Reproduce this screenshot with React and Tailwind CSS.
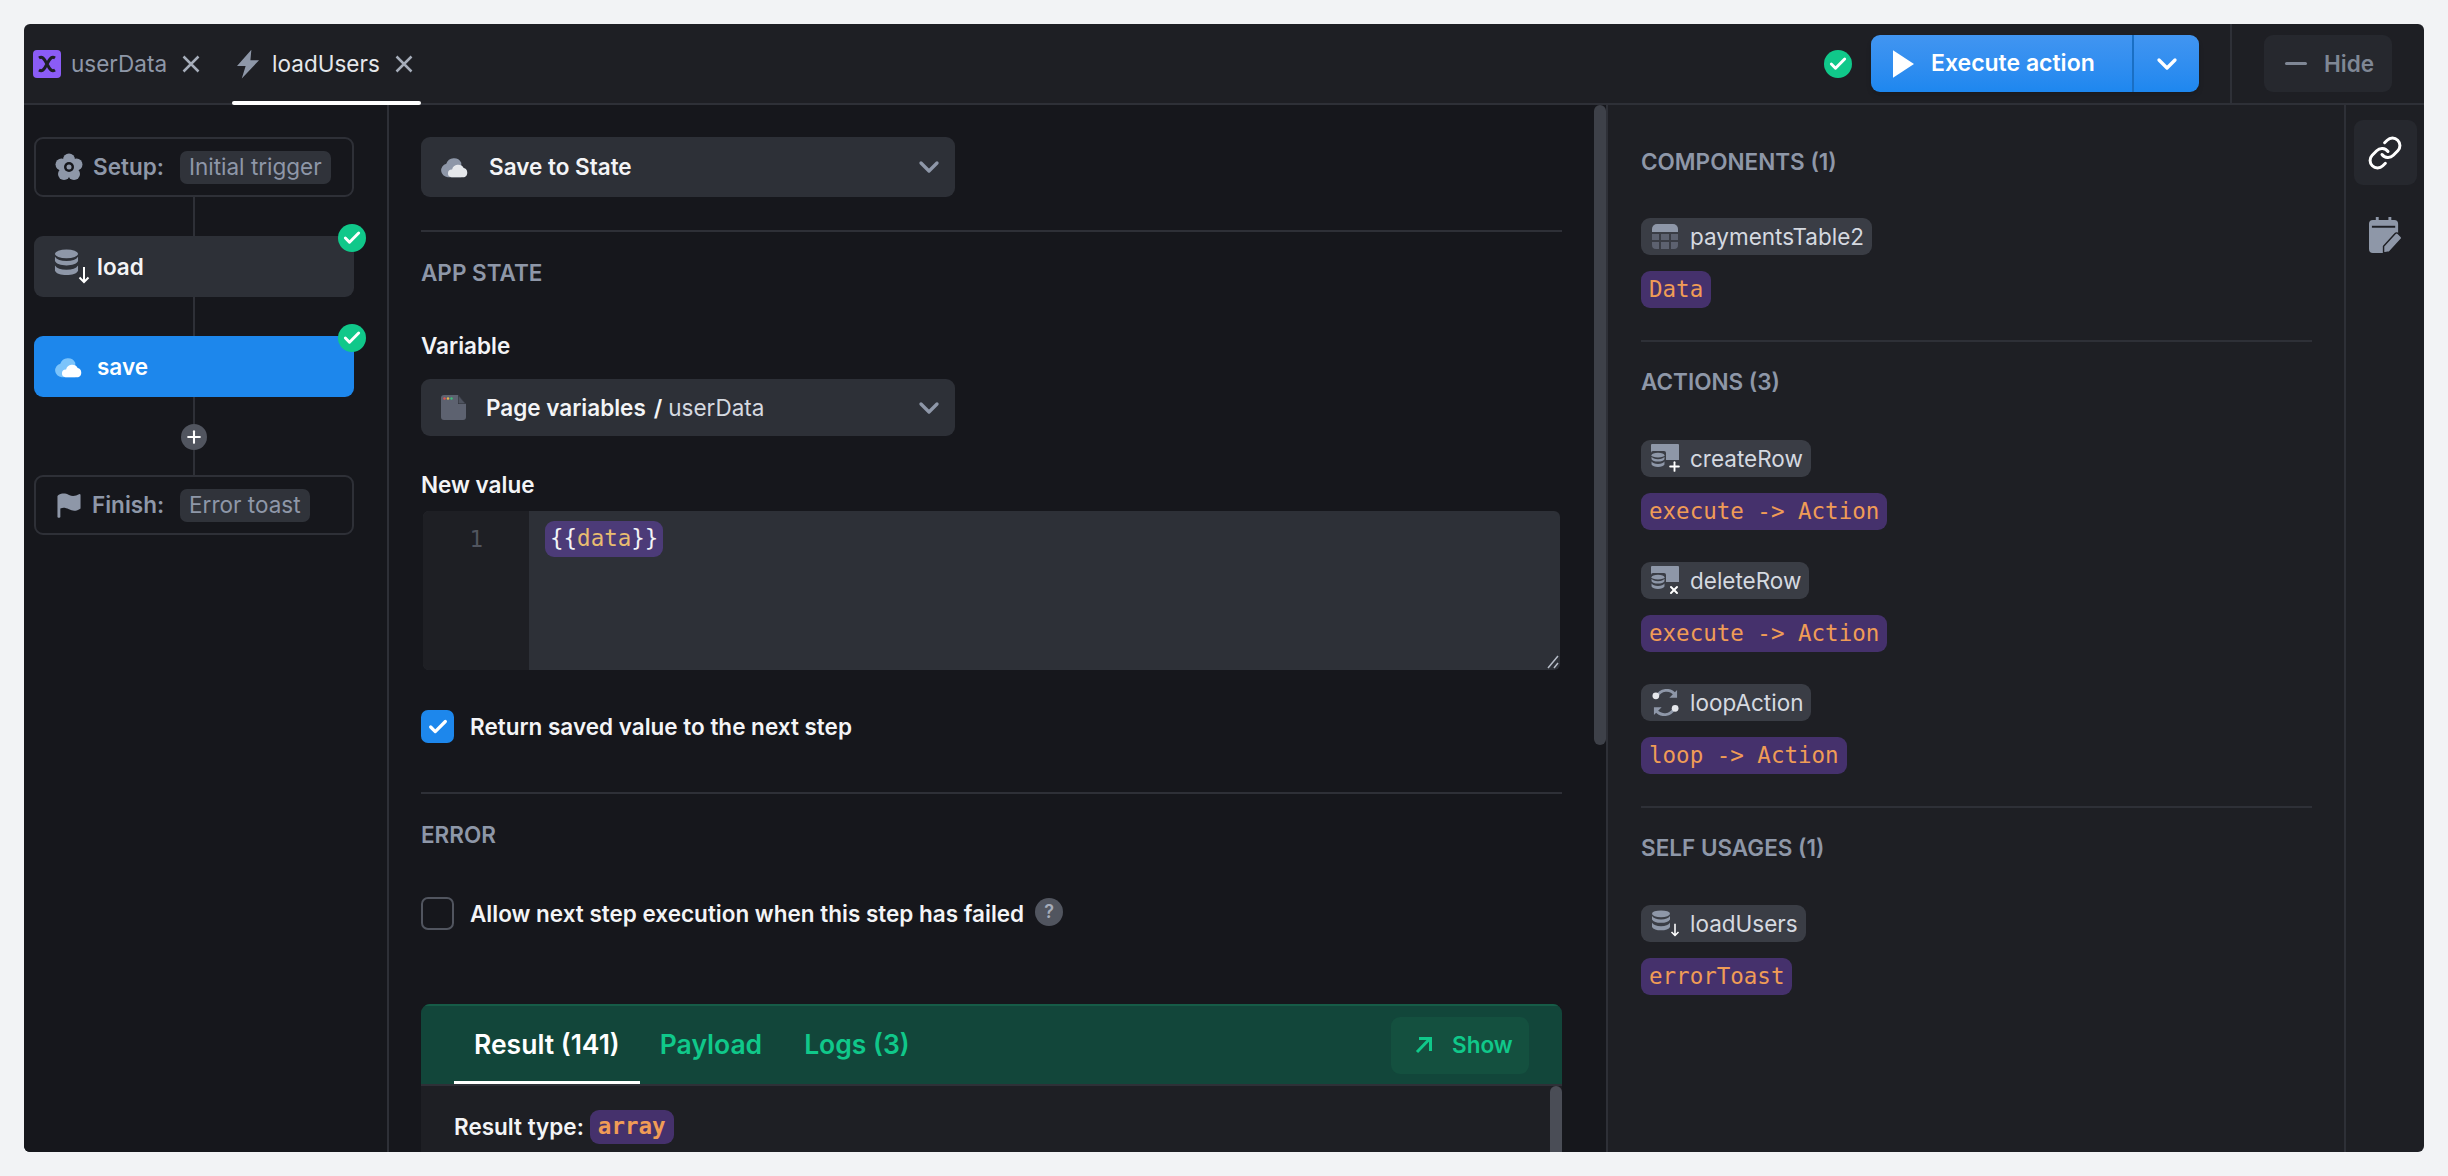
import React from 'react';
import { Check, ChevronDown, Link, Plus, X } from 'lucide-react';

const Db = ({ className = '' }) => (
  <svg viewBox="0 0 26 28" className={className} fill="currentColor">
    <ellipse cx="13" cy="5" rx="12" ry="4.5" />
    <path d="M1 8c2 3 6 4.5 12 4.5S23 11 25 8v4.5c-1.5 3-6 4.5-12 4.5S2.500 15.500 1 12.500z" />
    <path d="M1 17c2 3 6 4.500 12 4.500S23 20 25 17v5.500c-1.500 3-6 4.500-12 4.500S2.500 25.500 1 22.500z" />
  </svg>
);

const DbDown = ({ big }) => (
  <span className={`relative block shrink-0 ${big ? 'w-[36px] h-[36px]' : 'w-[28px] h-[28px]'}`}>
    <span className="absolute left-0 top-0 text-[#8e97a8]">
      <Db className={big ? 'w-[25px] h-[27px]' : 'w-[20px] h-[21px]'} />
    </span>
    <svg viewBox="0 0 12 18" className={`absolute text-white ${big ? 'left-[24px] top-[17px] w-[12px] h-[18px]' : 'left-[19px] top-[13px] w-[10px] h-[14px]'}`} fill="none" stroke="currentColor" strokeWidth="2">
      <path d="M6 1v15M1.500 11.500 6 16l4.500-4.500" />
    </svg>
  </span>
);

const DbSheet = ({ mark }) => (
  <span className="relative block w-[30px] h-[30px] shrink-0">
    <span className="absolute left-0 top-0 w-[28px] h-[17px] bg-[#8e97a8] rounded-[1px]" />
    <span className="absolute left-0 top-[7px] w-[15px] h-[17px] bg-[#3a3d45] rounded-[2px]" />
    <span className="absolute left-0 top-[8px] text-[#8e97a8]">
      <Db className="w-[14px] h-[16px]" />
    </span>
    <span className="absolute left-[14px] top-[16px] w-[14px] h-[14px] bg-[#3a3d45]" />
    {mark === 'plus' ? (
      <Plus className="absolute left-[16px] top-[15px] w-[15px] h-[15px] text-white" strokeWidth={3} />
    ) : (
      <X className="absolute left-[17px] top-[18px] w-[12px] h-[12px] text-white" strokeWidth={4} />
    )}
  </span>
);

const Cloud = ({ back, front, className = '' }) => (
  <svg viewBox="0 0 30 22" className={className}>
    <path d="M8 21.500a7 7 0 0 1-1.500-13.800A8.500 8.500 0 0 1 22 6.500V21.500z" fill={back} />
    <path d="M12 21.500a4 4 0 0 1 .5-8 6.500 6.500 0 0 1 12-1.500 5 5 0 0 1 .5 9.500z" fill={front} />
  </svg>
);

const Close = () => (
  <svg viewBox="0 0 18 18" className="w-[18px] h-[18px] shrink-0 text-[#a6adba]" fill="none" stroke="currentColor" strokeWidth="2.500">
    <path d="M1.500 1.500l15 15M16.500 1.500l-15 15" />
  </svg>
);

const Badge = () => (
  <span className="absolute right-[-12px] top-[-12px] flex items-center justify-center w-[28px] h-[28px] rounded-full bg-[#10c88a]">
    <Check className="w-[20px] h-[20px] text-white" strokeWidth={3.500} />
  </span>
);

const Line = ({ className }) => <div className={`w-[2px] mx-auto bg-[#2e3037] ${className}`} />;

const Label = ({ children, tone }) => (
  <div className={`text-[22.500px] leading-[28px] font-semibold ${tone || 'text-[#8e97a8]'}`}>{children}</div>
);

const Chip = ({ icon, children }) => (
  <div className="flex items-center w-fit h-[37px] pl-[10px] pr-[8px] gap-[9px] rounded-[9px] bg-[#3a3d45] text-[22.500px] text-[#d5d9e0]">
    <span className="flex items-center w-[30px] shrink-0">{icon}</span>
    <span>{children}</span>
  </div>
);

const Code = ({ children }) => (
  <div className="flex items-center w-fit h-[37px] px-[8px] rounded-[9px] bg-[#45316c] text-[#f09c56] text-[22.500px] font-['DejaVu_Sans_Mono',monospace]">
    {children}
  </div>
);

const Usage = ({ icon, name, code, className = '' }) => (
  <div className={className}>
    <Chip icon={icon}>{name}</Chip>
    <div className="mt-[16px]">
      <Code>{code}</Code>
    </div>
  </div>
);

const Select = ({ icon, children }) => (
  <div className="flex items-center w-[534px] rounded-[9px] bg-[#2d3037] pl-[19px] pr-[10px] h-full">
    {icon}
    <div className="flex-1 text-[22.500px] text-[#f3f4f6] flex items-center">{children}</div>
    <ChevronDown className="w-[32px] h-[32px] text-[#8e97a8]" strokeWidth={2.500} />
  </div>
);

const TableIcon = () => (
  <svg viewBox="0 0 26 25" className="ml-[1px] w-[26px] h-[25px] shrink-0">
    <path d="M5 0h16a5 5 0 0 1 5 5v3H0V5a5 5 0 0 1 5-5z" fill="#8e97a8" />
    <path d="M0 10h7v6H0zM9 10h8v6H9zM19 10h7v6h-7zM0 18h7v7H4a4 4 0 0 1-4-4zM9 18h8v7H9zM19 18h7v3a4 4 0 0 1-4 4h-3z" fill="#5d6270" />
  </svg>
);

const LoopIcon = () => (
  <svg viewBox="0 0 30 28" className="w-[29px] h-[27px] shrink-0" fill="none">
    <path d="M6 8a11 11 0 0 1 19-2M24 20a11 11 0 0 1-19 2" stroke="#8e97a8" strokeWidth="3" />
    <path d="M27 1v8h-8zM3 27v-8h8z" fill="#8e97a8" />
    <circle cx="5" cy="7" r="3.500" fill="#e5e7eb" />
    <circle cx="25" cy="20" r="3.500" fill="#e5e7eb" />
  </svg>
);

export default function App() {
  return (
    <div className="h-[1176px] p-6 bg-[#f2f3f5] font-['Inter',sans-serif] overflow-hidden">
      <div className="flex flex-col h-full rounded-[6px] overflow-hidden bg-[#1e1f24]">
        {/* Header */}
        <div className="flex items-stretch h-[81px] shrink-0 border-b-2 border-[#2e3037]">
          <div className="flex items-center flex-1 relative pl-[9px] text-[22.500px]">
            <span className="flex items-center justify-center w-[28px] h-[28px] rounded-[4px] bg-[#8b5cf6]">
              <svg viewBox="0 0 20 20" className="w-[20px] h-[20px]" fill="none" stroke="#1e1f24" strokeWidth="3">
                <path d="M2 4c3-2 5 0 8 6s5 8 8 6M18 4c-3-2-5 0-8 6s-5 8-8 6" />
              </svg>
            </span>
            <span className="ml-[10px] text-[#8e97a8]">userData</span>
            <span className="ml-[15px]"><Close /></span>
            <div className="relative flex items-center h-full ml-[32px] w-[189px] pl-[5px]">
              <svg viewBox="0 0 24 30" className="w-[23px] h-[30px] text-[#8e97a8] shrink-0" fill="currentColor">
                <path d="M15 0 0 17h9l-4 13L23 11h-9z" />
              </svg>
              <span className="ml-[12px] text-[#e5e7eb]">loadUsers</span>
              <span className="ml-[15px]"><Close /></span>
              <div className="absolute left-0 right-0 bottom-[-2px] h-[4px] rounded-full bg-white" />
            </div>
            <div className="flex-1" />
            <span className="flex items-center justify-center w-[28px] h-[28px] rounded-full bg-[#10c88a] mr-[19px]">
              <Check className="w-[20px] h-[20px] text-white" strokeWidth={3.500} />
            </span>
            <div className="flex h-[57px] w-[328px] rounded-[9px] overflow-hidden bg-gradient-to-b from-[#4195f1] to-[#1d87ef] shadow-md mr-[31px] text-white">
              <div className="flex items-center flex-1 pl-[22px] gap-[17px] text-[23px] font-semibold">
                <svg viewBox="0 0 20 26" className="w-[21px] h-[28px]" fill="currentColor">
                  <path d="M0 0 20 13 0 26z" />
                </svg>
                Execute action
              </div>
              <div className="w-[2px] bg-[#1a6fc4]" />
              <div className="flex items-center justify-center w-[65px]">
                <ChevronDown className="w-[32px] h-[32px]" strokeWidth={2.500} />
              </div>
            </div>
          </div>
          <div className="flex items-center w-[194px] border-l-2 border-[#2e3037] pl-[32px]">
            <div className="flex items-center pl-[21px] gap-[17px] w-[128px] h-[57px] rounded-[9px] bg-[#26282e] text-[22.500px] font-semibold text-[#7f8795]">
              <div className="w-[22px] h-[3px] rounded-full bg-[#7f8795]" />
              Hide
            </div>
          </div>
        </div>

        <div className="flex flex-1 min-h-0">
          {/* Steps */}
          <div className="w-[365px] shrink-0 bg-[#16171c] border-r-2 border-[#2e3037] pl-[10px] pr-[33px] pt-[32px] text-[22.500px]">
            <div className="flex items-center h-[60px] rounded-[9px] border-2 border-[#2e3037] pl-[19px]">
              <svg viewBox="0 0 28 28" className="w-[28px] h-[28px] text-[#8e97a8] shrink-0" fill="currentColor">
                <circle cx="14" cy="6.500" r="6" />
                <circle cx="21.500" cy="11.500" r="6" />
                <circle cx="19" cy="21" r="6" />
                <circle cx="9" cy="21" r="6" />
                <circle cx="6.500" cy="11.500" r="6" />
                <circle cx="14" cy="14" r="7" />
                <circle cx="14" cy="14" r="5" fill="#16171c" />
                <circle cx="14" cy="14" r="2.500" />
              </svg>
              <span className="ml-[10px] font-semibold text-[#8e97a8]">Setup:</span>
              <span className="ml-[16px] px-[9px] h-[33px] flex items-center rounded-[7px] bg-[#30333a] text-[#8e97a8]">Initial trigger</span>
            </div>
            <Line className="h-[39px]" />
            <div className="relative flex items-center h-[61px] rounded-[9px] bg-[#2d3037] pl-[20px]">
              <DbDown big />
              <span className="ml-[7px] font-semibold text-[#f3f4f6]">load</span>
              <Badge />
            </div>
            <Line className="h-[39px]" />
            <div className="relative flex items-center h-[61px] rounded-[9px] bg-[#1d87ec] pl-[20px]">
              <Cloud back="#7cc4fb" front="#ffffff" className="w-[29px] h-[22px] shrink-0" />
              <span className="ml-[14px] font-semibold text-white">save</span>
              <Badge />
            </div>
            <Line className="h-[27px]" />
            <div className="flex items-center justify-center w-[26px] h-[26px] mx-auto rounded-full bg-[#51555f]">
              <Plus className="w-[20px] h-[20px] text-white" strokeWidth={2.500} />
            </div>
            <Line className="h-[25px]" />
            <div className="flex items-center h-[60px] rounded-[9px] border-2 border-[#2e3037] pl-[21px]">
              <svg viewBox="0 0 24 26" className="w-[24px] h-[25px] text-[#8e97a8] shrink-0" fill="currentColor">
                <path d="M1 2c4-2 7-2 11 0s7 1 11-1c1 0 1 1 1 1v14c-4 3-8 3-12 1s-6-2-9-1v9c0 1-3 1-3 0V3z" />
              </svg>
              <span className="ml-[11px] font-semibold text-[#8e97a8]">Finish:</span>
              <span className="ml-[16px] px-[9px] h-[33px] flex items-center rounded-[7px] bg-[#30333a] text-[#8e97a8]">Error toast</span>
            </div>
          </div>

          {/* Step form */}
          <div className="relative w-[1219px] shrink-0 bg-[#16171c] border-r-2 border-[#2e3037] overflow-hidden pl-[32px] pr-[44px] pt-[32px]">
            <div className="absolute right-0 top-0 w-[12px] h-[640px] rounded-full bg-[#3e4149]" />

            <div className="h-[60px]">
              <Select icon={<Cloud back="#8e97a8" front="#e5e7eb" className="w-[29px] h-[22px] mr-[20px] shrink-0" />}>
                <span className="font-semibold">Save to State</span>
              </Select>
            </div>
            <div className="h-[2px] mt-[33px] bg-[#2e3037]" />
            <div className="mt-[27px]"><Label>APP STATE</Label></div>
            <div className="mt-[45px]"><Label tone="text-[#f3f4f6]">Variable</Label></div>
            <div className="h-[57px] mt-[19px]">
              <Select icon={
                <svg viewBox="0 0 25 25" className="ml-[1px] w-[25px] h-[25px] mr-[20px] shrink-0">
                  <path d="M3 0h14l8 9v13a3 3 0 0 1-3 3H3a3 3 0 0 1-3-3V3a3 3 0 0 1 3-3z" fill="#5d6270" />
                  <path d="M17 0l8 9h-8z" fill="#2d3037" />
                  <path d="M17.500 1l6.500 7.500h-6.500z" fill="#5d6270" opacity=".7" />
                  <circle cx="3.500" cy="3.500" r="1.200" fill="#e05252" />
                  <circle cx="7" cy="3.500" r="1.200" fill="#e5b84c" />
                  <circle cx="10.500" cy="3.500" r="1.200" fill="#3fbf7a" />
                </svg>
              }>
                <span className="font-semibold">Page variables</span>
                <span className="font-semibold ml-[8px] mr-[6px]">/</span>
                <span className="text-[#d5d9e0]">userData</span>
              </Select>
            </div>
            <div className="mt-[35px]"><Label tone="text-[#f3f4f6]">New value</Label></div>
            <div className="flex h-[159px] mt-[12px] mx-[2px] rounded-[6px] overflow-hidden bg-[#2d3037]">
              <div className="w-[106px] bg-[#1e1f24] pt-[13px] pr-[46px] text-right text-[22.500px] leading-[30px] text-[#51555f] font-['DejaVu_Sans_Mono',monospace]">1</div>
              <div className="relative flex-1 pt-[10px] pl-[16px]">
                <div className="flex items-center w-fit h-[36px] px-[5px] rounded-[9px] bg-[#4c3b78] text-[22.500px] text-[#f3f4f6] font-['DejaVu_Sans_Mono',monospace]">
                  {'{{'}<span className="text-[#e9bd70]">data</span>{'}}'}
                </div>
                <svg viewBox="0 0 12 14" className="absolute right-[1px] bottom-[1px] w-[12px] h-[14px]" fill="none" stroke="#b6bcc7" strokeWidth="1.500">
                  <path d="M1 13 11 1M7 13l4-5" />
                </svg>
              </div>
            </div>
            <div className="flex items-center h-[33px] mt-[40px] text-[22.500px] font-semibold text-[#f3f4f6]">
              <span className="flex items-center justify-center w-[33px] h-[33px] rounded-[7px] bg-[#1d87ec]">
                <Check className="w-[22px] h-[22px] text-white" strokeWidth={3.500} />
              </span>
              <span className="ml-[16px]">Return saved value to the next step</span>
            </div>
            <div className="h-[2px] mt-[49px] bg-[#2e3037]" />
            <div className="mt-[27px]"><Label>ERROR</Label></div>
            <div className="flex items-center h-[33px] mt-[48px] text-[22.500px] font-semibold text-[#f3f4f6]">
              <span className="w-[33px] h-[33px] rounded-[7px] border-2 border-[#51555f]" />
              <span className="ml-[16px]">Allow next step execution when this step has failed</span>
              <span className="flex items-center justify-center ml-[11px] mb-[4px] w-[28px] h-[28px] rounded-full bg-[#51555f] text-[18px] font-semibold text-[#a6adba]">?</span>
            </div>

            <div className="relative mt-[74px] rounded-t-[9px] overflow-hidden bg-[#1e1f24] h-[148px]">
              <div className="flex items-center h-[82px] bg-[#12463a] border-t-2 border-[#165c47] border-b-2 border-b-[#2e3037] pl-[33px] pr-[33px] text-[26.500px] font-semibold text-[#10c88a]">
                <div className="relative flex items-center h-full px-[20px] text-white">
                  Result (141)
                  <div className="absolute left-0 right-0 bottom-0 h-[3px] bg-white" />
                </div>
                <span className="ml-[20px]">Payload</span>
                <span className="ml-[42px]">Logs (3)</span>
                <div className="flex-1" />
                <div className="flex items-center justify-start pl-[23px] gap-[18px] w-[138px] h-[57px] rounded-[9px] bg-[#14503f] text-[22.500px]">
                  <svg viewBox="0 0 20 18" className="w-[20px] h-[18px]" fill="none" stroke="currentColor" strokeWidth="3">
                    <path d="M3 16 16 2.500M5 2.500h11.500V15" />
                  </svg>
                  Show
                </div>
              </div>
              <div className="flex items-center h-[34px] mt-[24px] pl-[33px] text-[22.500px] font-semibold text-[#f3f4f6]">
                Result type:
                <span className="flex items-center h-[34px] px-[8px] ml-[6px] rounded-[9px] bg-[#45316c] text-[#f09c56] text-[22.500px] font-['DejaVu_Sans_Mono',monospace]">array</span>
              </div>
              <div className="absolute right-0 top-[82px] w-[12px] h-[80px] rounded-full bg-[#4a4d56]" />
            </div>
          </div>

          {/* Usages */}
          <div className="flex-1 pl-[33px] pr-[32px] pt-[43px]">
            <Label>COMPONENTS (1)</Label>
            <Usage className="mt-[42px]" icon={<TableIcon />} name="paymentsTable2" code="Data" />
            <div className="h-[2px] mt-[32px] bg-[#2e3037]" />
            <div className="mt-[26px]"><Label>ACTIONS (3)</Label></div>
            <Usage className="mt-[44px]" icon={<DbSheet mark="plus" />} name="createRow" code="execute -> Action" />
            <Usage className="mt-[32px]" icon={<DbSheet mark="x" />} name="deleteRow" code="execute -> Action" />
            <Usage className="mt-[32px]" icon={<LoopIcon />} name="loopAction" code="loop -> Action" />
            <div className="h-[2px] mt-[32px] bg-[#2e3037]" />
            <div className="mt-[26px]"><Label>SELF USAGES (1)</Label></div>
            <Usage className="mt-[43px]" icon={<DbDown />} name="loadUsers" code="errorToast" />
          </div>

          {/* Side tools */}
          <div className="flex flex-col items-center w-[80px] shrink-0 border-l-2 border-[#2e3037] pt-[15px]">
            <div className="flex items-center justify-center w-[63px] h-[65px] rounded-[9px] bg-[#26282e]">
              <Link className="w-[36px] h-[36px] text-white" strokeWidth={2} />
            </div>
            <svg viewBox="0 0 34 37" className="mt-[32px] w-[33px] h-[36px] text-[#8e97a8]" fill="currentColor">
              <path d="M7 0h3v3h10V0h3v3h3a4 4 0 0 1 4 4v10L15 30v7H4a4 4 0 0 1-4-4V7a4 4 0 0 1 4-4h3z" />
              <rect x="3" y="9" width="24" height="2" fill="#1e1f24" />
              <path d="M27 17a2 2 0 0 1 3 0l3 3a2 2 0 0 1 0 3L21 36l-6 1 0-7z" stroke="#1e1f24" strokeWidth="1.500" />
            </svg>
          </div>
        </div>
      </div>
    </div>
  );
}
